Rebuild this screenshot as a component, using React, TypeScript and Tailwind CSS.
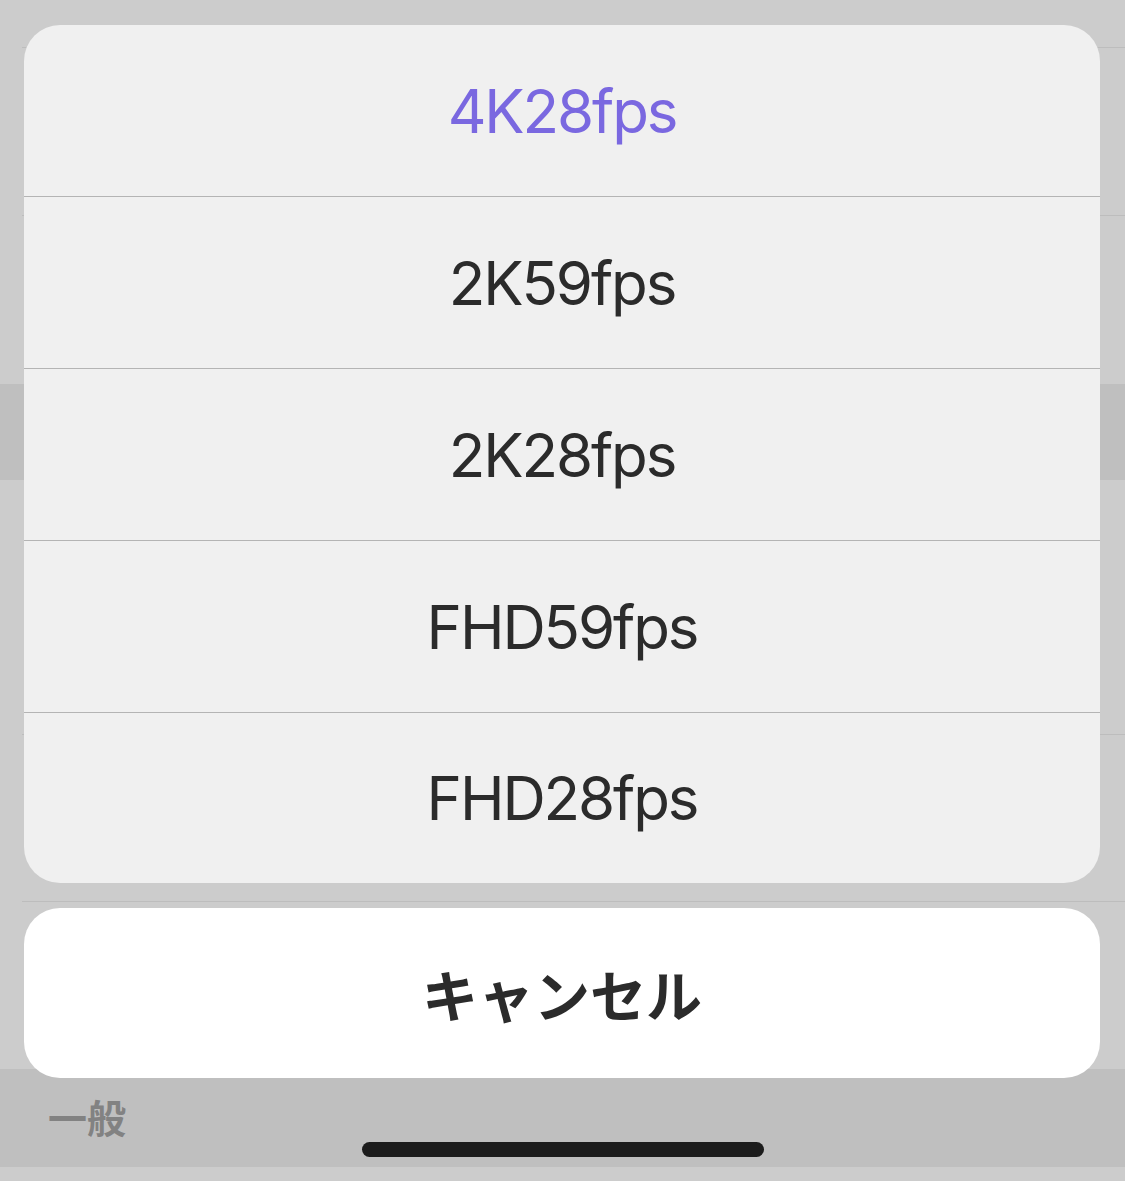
import * as React from "react";

const options = ["4K28fps", "2K59fps", "2K28fps", "FHD59fps", "FHD28fps"];
const selected = "4K28fps";

function BackgroundList() {
  return (
    <div className="flex flex-col">
      <div className="h-[48px] border-b border-[#bdbdbd] ml-[22px]" />
      <div className="h-[168px] border-b border-[#bdbdbd] ml-[22px]" />
      <div className="h-[168px]" />
      <div className="h-[96px] bg-[#bfbfbf]" />
      <div className="h-[255px] border-b border-[#bdbdbd] ml-[22px]" />
      <div className="h-[167px] border-b border-[#bdbdbd] ml-[22px]" />
      <div className="h-[167px]" />
      <div className="h-[98px] bg-[#bfbfbf] flex items-center pl-[48px]">
        <span
          className="text-[39px] leading-none text-[#828282] font-bold pb-[4px]"
          style={{ fontFamily: '"Noto Sans CJK JP", sans-serif' }}
        >
          一般
        </span>
      </div>
      <div className="h-[20px]" />
    </div>
  );
}

export default function App() {
  return (
    <div className="relative w-[1125px] h-[1181px] overflow-hidden bg-[#cccccc]">
      <BackgroundList />

      <div className="absolute left-[24px] right-[25px] top-[25px] flex flex-col gap-[25px]">
        <div className="rounded-[36px] bg-[#f0f0f0] overflow-hidden flex flex-col">
          {options.map((option, index) => (
            <div
              key={option}
              className={
                index < options.length - 1
                  ? "h-[172px] border-b border-[#b4b4b4] flex items-center justify-center"
                  : "h-[170px] flex items-center justify-center"
              }
            >
              <span
                className={
                  option === selected
                    ? "text-[60px] leading-none tracking-[-0.035em] text-[#7a68e0]"
                    : "text-[60px] leading-none tracking-[-0.035em] text-[#2b2b2b]"
                }
                style={{ fontFamily: "Inter, sans-serif" }}
              >
                {option}
              </span>
            </div>
          ))}
        </div>

        <div className="h-[170px] rounded-[36px] bg-white flex items-center justify-center">
          <span
            className="text-[56px] leading-none font-bold text-[#2b2b2b]"
            style={{ fontFamily: '"Noto Sans CJK JP", sans-serif' }}
          >
            キャンセル
          </span>
        </div>
      </div>

      <div className="absolute left-[362px] top-[1142px] w-[402px] h-[15px] rounded-full bg-[#1c1c1c]" />
    </div>
  );
}
